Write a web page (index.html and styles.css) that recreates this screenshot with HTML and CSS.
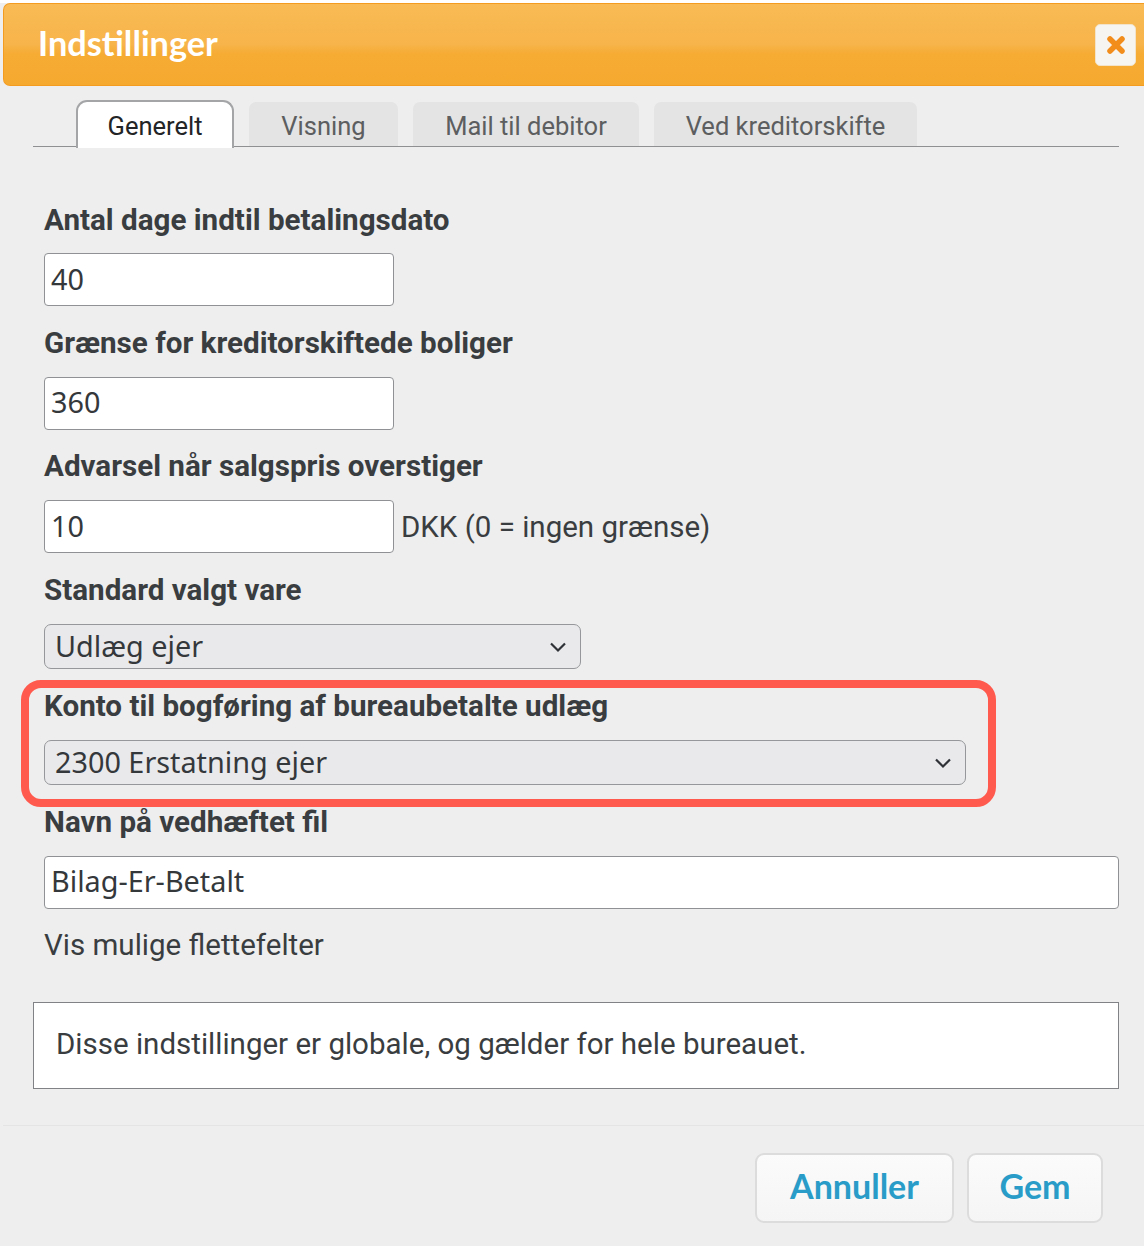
FILE: index.html
```html
<!DOCTYPE html>
<html lang="en">
<head>
    <meta charset="UTF-8">
    <meta name="viewport" content="width=device-width, initial-scale=1.0">
    <title>Indstillinger</title>
    <link rel="stylesheet" href="styles.css">
</head>
<body>
    <div class="dialog">
        <div class="dialog-header">
            <span class="dialog-title">Indstillinger</span>
            <button class="close-button" type="button" aria-label="Luk">
                <svg width="22" height="22" viewBox="0 0 22 22"><path d="M5 5L17 17M17 5L5 17" stroke="#f28c1a" stroke-width="5.5" stroke-linecap="round" fill="none"/></svg>
            </button>
        </div>

        <div class="tabs">
            <div class="tab tab-active">Generelt</div>
            <div class="tab tab-visning">Visning</div>
            <div class="tab tab-mail">Mail til debitor</div>
            <div class="tab tab-ved">Ved kreditorskifte</div>
        </div>

        <div class="form">
            <div class="field">
                <label class="field-label">Antal dage indtil betalingsdato</label>
                <input class="text-input input-short" type="text" value="40">
            </div>
            <div class="field">
                <label class="field-label">Grænse for kreditorskiftede boliger</label>
                <input class="text-input input-short" type="text" value="360">
            </div>
            <div class="field">
                <label class="field-label">Advarsel når salgspris overstiger</label>
                <div class="input-row">
                    <input class="text-input input-short" type="text" value="10">
                    <span class="input-suffix">DKK (0 = ingen grænse)</span>
                </div>
            </div>
            <div class="field">
                <label class="field-label">Standard valgt vare</label>
                <div class="select-wrap select-medium">
                    <select class="select-input"><option>Udlæg ejer</option></select>
                    <svg class="chevron" width="18" height="12" viewBox="0 0 18 12"><path d="M2 2.5L9 9.5L16 2.5" stroke="#2f3338" stroke-width="2.2" fill="none"/></svg>
                </div>
            </div>
            <div class="field field-highlight">
                <label class="field-label">Konto til bogføring af bureaubetalte udlæg</label>
                <div class="select-wrap select-long">
                    <select class="select-input"><option>2300 Erstatning ejer</option></select>
                    <svg class="chevron" width="18" height="12" viewBox="0 0 18 12"><path d="M2 2.5L9 9.5L16 2.5" stroke="#2f3338" stroke-width="2.2" fill="none"/></svg>
                </div>
            </div>
            <div class="field">
                <label class="field-label">Navn på vedhæftet fil</label>
                <input class="text-input input-full" type="text" value="Bilag-Er-Betalt">
            </div>
        </div>

        <div class="merge-link">Vis mulige flettefelter</div>

        <div class="notice">Disse indstillinger er globale, og gælder for hele bureauet.</div>

        <div class="dialog-footer">
            <button class="footer-button button-cancel" type="button">Annuller</button>
            <button class="footer-button button-save" type="button">Gem</button>
        </div>
    </div>
</body>
</html>
```

FILE: styles.css
```css
html, body {
    margin: 0;
    height: 100%;
}
body {
    background-color: #eeeeee;
    font-family: 'Roboto', sans-serif;
    color: #3a3d40;
    overflow: hidden;
}
.dialog {
    padding-top: 3px;
    height: 1243px;
    background: linear-gradient(#ffffff 3px, #eeeeee 3px);
}
.dialog-header {
    display: flex;
    align-items: center;
    justify-content: space-between;
    box-sizing: border-box;
    height: 83px;
    margin-left: 3px;
    padding: 0 8px 0 34px;
    background: linear-gradient(#f9bb55 0%, #f7b44a 50%, #f6ab33 62%, #f6a92f 100%);
    border: 1px solid #f39c1f;
    border-right: none;
    border-radius: 7px 0 0 7px;
}
.dialog-title {
    padding-bottom: 4px;
    font-family: 'Lato', sans-serif;
    font-weight: 700;
    font-size: 34.3px;
    color: #ffffff;
}
.close-button {
    display: flex;
    align-items: center;
    justify-content: center;
    width: 41px;
    height: 42px;
    padding: 0;
    background: #f6f5f2;
    border: 1px solid #f3e3c8;
    border-radius: 5px;
}

.tabs {
    display: flex;
    align-items: flex-end;
    gap: 15px;
    height: 60px;
    margin: 0 25px 0 33px;
    padding-left: 43px;
    border-bottom: 1.5px solid #8e9092;
}
.tab {
    display: flex;
    align-items: center;
    justify-content: center;
    box-sizing: border-box;
    height: 44px;
    padding-top: 4px;
    font-size: 25.5px;
    color: #5c5e60;
    background-color: #e4e4e4;
    border-radius: 7px 7px 0 0;
}
.tab-active {
    width: 158px;
    height: 48px;
    margin-bottom: -1.5px;
    padding-top: 2px;
    color: #222426;
    background-color: #ffffff;
    border: 2px solid #a3a5a7;
    border-bottom: none;
    border-radius: 11px 11px 0 0;
}
.tab-visning { width: 149px; }
.tab-mail { width: 226px; }
.tab-ved { width: 263px; }

.form {
    display: flex;
    flex-direction: column;
    gap: 19.5px;
    margin: 56px 25px 0 44px;
}
.field {
    display: flex;
    flex-direction: column;
    align-items: flex-start;
    gap: 17px;
}
.field:first-child {
    gap: 16px;
}
.field-label {
    font-size: 29.6px;
    font-weight: 700;
    line-height: 34px;
    color: #3a3d40;
}
.text-input {
    box-sizing: border-box;
    height: 53px;
    padding: 0 6px 3px;
    font-family: 'Noto Sans', sans-serif;
    font-size: 28.8px;
    color: #35383b;
    background-color: #ffffff;
    border: 1.5px solid #8f9194;
    border-radius: 4px;
    outline: none;
}
.input-short { width: 350px; }
.input-full { width: 100%; }
.input-row {
    display: flex;
    align-items: center;
    gap: 7px;
}
.input-suffix {
    font-size: 29.5px;
    color: #3a3d40;
}
.select-wrap {
    position: relative;
    height: 45px;
}
.select-medium { width: 537px; }
.select-long { width: 922px; }
.select-input {
    appearance: none;
    -webkit-appearance: none;
    box-sizing: border-box;
    width: 100%;
    height: 100%;
    padding: 0 10px 2px;
    font-family: 'Noto Sans', sans-serif;
    font-size: 28.8px;
    color: #35383b;
    background-color: #e9e9eb;
    border: 1.5px solid #95979a;
    border-radius: 7px;
}
.chevron {
    position: absolute;
    top: 17px;
    right: 14px;
}
.field-highlight {
    position: relative;
    margin-top: 1px;
}
.field-highlight::after {
    content: "";
    position: absolute;
    top: -9px;
    left: -23px;
    width: 975px;
    height: 127px;
    box-sizing: border-box;
    border: 8px solid #ff5a4d;
    border-radius: 20px;
}
.merge-link {
    margin: 19px 0 0 44px;
    font-size: 29.5px;
    line-height: 34px;
    color: #3a3d40;
}
.notice {
    display: flex;
    align-items: center;
    box-sizing: border-box;
    height: 87px;
    margin: 40px 25px 0 33px;
    padding: 0 0 2px 22px;
    font-size: 29.5px;
    color: #3a3d40;
    background-color: #ffffff;
    border: 1.5px solid #808285;
}
.dialog-footer {
    display: flex;
    justify-content: flex-end;
    gap: 13px;
    margin: 36px 0 0 3px;
    padding: 27px 41px 0 0;
    border-top: 1.5px solid #e4e4e4;
}
.footer-button {
    box-sizing: border-box;
    height: 70px;
    padding: 0 0 5px;
    font-family: 'Lato', sans-serif;
    font-weight: 700;
    font-size: 34px;
    color: #2a9cc8;
    background: linear-gradient(#fbfbfb, #f5f5f5);
    border: 2px solid #dcdcdc;
    border-radius: 9px;
}
.button-cancel { width: 199px; }
.button-save { width: 136px; }
```
